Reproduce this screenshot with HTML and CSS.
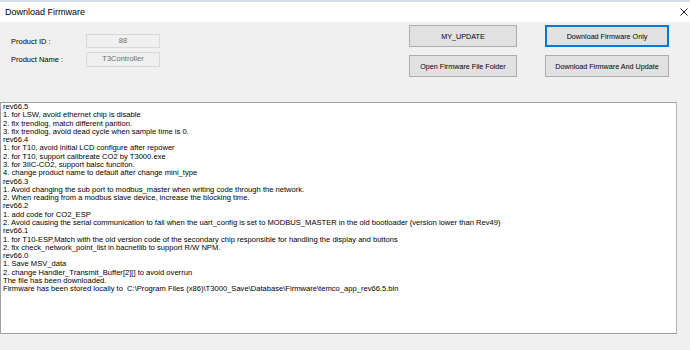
FILE: index.html
```html
<!DOCTYPE html>
<html lang="en">
<head>
  <meta charset="UTF-8"/>
  <title>Download Firmware</title>
  <link rel="stylesheet" href="styles.css">
</head>
<body>
  <div class="window">
    <div class="titlebar">
      <span class="title">Download Firmware</span>
      <svg class="close" width="9" height="9" viewBox="0 0 9 9">
        <path d="M0.5 0.5 L8.5 8.5 M8.5 0.5 L0.5 8.5" stroke="#000" stroke-width="1" fill="none"/>
      </svg>
    </div>
    <div class="panel">
      <div class="form">
        <div class="row">
          <label>Product ID :</label>
          <div class="field">88</div>
        </div>
        <div class="row">
          <label>Product Name :</label>
          <div class="field">T3Controller</div>
        </div>
      </div>
      <div class="buttons">
        <button class="btn">MY_UPDATE</button>
        <button class="btn default">Download Firmware Only</button>
        <button class="btn">Open Firmware File Folder</button>
        <button class="btn">Download Firmware And Update</button>
      </div>
    </div>
    <div class="log">rev66.5
1. for LSW, avoid ethernet chip is disable
2. fix trendlog, match different parition.
3. fix trendlog, avoid dead cycle when sample time is 0.
rev66.4
1. for T10, avoid initial LCD configure after repower
2. for T10, support calibreate CO2 by T3000.exe
3. for 3IIC-CO2, support baisc funciton.
4. change product name to default after change mini_type
rev66.3
1. Avoid changing the sub port to modbus_master when writing code through the network.
2. When reading from a modbus slave device, increase the blocking time.
rev66.2
1. add code for CO2_ESP
2. Avoid causing the serial communication to fail when the uart_config is set to MODBUS_MASTER in the old bootloader (version lower than Rev49)
rev66.1
1. for T10-ESP,Match with the old version code of the secondary chip responsible for handling the display and buttons
2. fix check_network_point_list in bacnetlib to support R/W NPM.
rev66.0
1. Save MSV_data
2. change Handler_Transmit_Buffer[2][] to avoid overrun
The file has been downloaded.
Firmware has been stored locally to  C:\Program Files (x86)\T3000_Save\Database\Firmware\temco_app_rev66.5.bin</div>
  </div>
</body>
</html>
```

FILE: styles.css
```css
*, *::before, *::after { box-sizing: border-box; margin: 0; padding: 0; }
html, body { width: 690px; height: 350px; overflow: hidden; background: #f0f0f0;
  font-family: 'Liberation Sans', Arial, sans-serif; color: #000;
}
.window { display: flex; flex-direction: column; height: 350px; }
.titlebar { height: 22px; background: #fff; border-top: 2px solid #d5dde6;
  display: flex; align-items: center; padding: 0 2px 0 5px;
}
.title { font-size: 9px; }
.close { margin-left: auto; width: 8px; height: 8px; }
.panel { height: 80px; display: flex; align-items: flex-start; }
.form { margin: 12px 0 0 11px; display: flex; flex-direction: column; gap: 4px; }
.row { display: flex; align-items: center; height: 14px; }
.row:last-child { height: 15px; }
.row label { width: 75px; font-size: 7.5px; }
.field { width: 74px; height: 100%; border: 1px solid #d9d9d9; background: #f0f0f0;
  color: #6d6d6d; font-size: 7.5px; text-align: center; line-height: 12px;
}
.buttons { margin: 3px 21px 0 auto; display: grid;
  grid-template-columns: 108px 124px; column-gap: 28px; row-gap: 8px;
}
.btn { height: 22px; background: #e1e1e1; border: 1px solid #adadad;
  font-family: inherit; font-size: 7.2px; color: #000;
}
.btn.default { border: 1px solid #0078d7; box-shadow: inset 0 0 0 1px #0078d7; }
.log { width: 677px; height: 232px; background: #fff; border: 1px solid #a0a0a0;
  border-right-color: #b4b4b4; padding: 0 2px; white-space: pre;
  font-size: 7.6px; line-height: 8.28px; overflow: hidden;
}
```
